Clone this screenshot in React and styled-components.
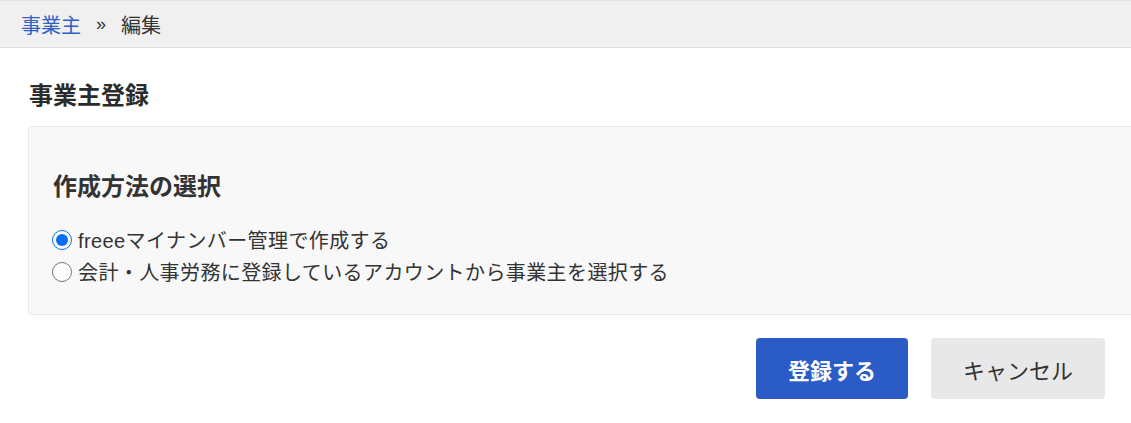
import React from "react";
import styled, { createGlobalStyle } from "styled-components";

const Global = createGlobalStyle`
  html, body { margin: 0; padding: 0; background: #fff; overflow: hidden; }
  body { font-family: "Liberation Sans", "Noto Sans CJK JP", sans-serif; color: #333; }
`;

const Page = styled.div`
  width: 1131px;
  height: 423px;
  overflow: hidden;
`;

const Header = styled.nav`
  height: 46px;
  background: #f0f0f0;
  border-top: 1px solid #e2e2e8;
  border-bottom: 1px solid #dedede;
  display: flex;
  align-items: center;
  padding-left: 21px;
  font-size: 20px;
  gap: 15px;
`;

const Crumb = styled.a`
  color: ${(p) => (p.$link ? "#2f5fc4" : "#333")};
  text-decoration: none;
`;

const Sep = styled.span`
  color: #333;
  font-size: 18px;
`;

const Main = styled.main`
  padding-left: 28px;
`;

const Title = styled.h1`
  margin: 0;
  padding: 32px 0 0 1px;
  height: 46px;
  font-size: 24px;
  font-weight: bold;
  line-height: 32px;
  color: #2b2b2b;
`;

const Panel = styled.section`
  margin-right: -20px;
  height: 189px;
  box-sizing: border-box;
  background: #f8f8f8;
  border: 1px solid #e8e8e8;
  border-radius: 4px;
  padding: 44px 24px 0;
`;

const PanelTitle = styled.h2`
  margin: 0 0 22px;
  font-size: 24px;
  line-height: 32px;
  font-weight: bold;
  color: #333;
`;

const Option = styled.label`
  display: flex;
  align-items: center;
  height: 32px;
  line-height: 32px;
  font-size: 20px;
  letter-spacing: 0.4px;
  color: #333;
  gap: 6px;
`;

const Radio = styled.input.attrs({ type: "radio" })`
  width: 20px;
  height: 20px;
  margin: 0 0 2px -1px;
  accent-color: #0a6cf5;
`;

const Actions = styled.div`
  display: flex;
  justify-content: flex-end;
  gap: 23px;
  padding: 23px 26px 0 0;
`;

const Button = styled.button`
  height: 61px;
  min-width: ${(p) => (p.$primary ? "152px" : "174px")};
  border: none;
  border-radius: 4px;
  font-family: inherit;
  font-size: 22px;
  font-weight: ${(p) => (p.$primary ? "bold" : "normal")};
  color: ${(p) => (p.$primary ? "#fff" : "#333")};
  background: ${(p) => (p.$primary ? "#2a5bc7" : "#e8e8e8")};
`;

export default function App() {
  return (
    <Page>
      <Global />
      <Header>
        <Crumb $link href="#">事業主</Crumb>
        <Sep>»</Sep>
        <Crumb>編集</Crumb>
      </Header>
      <Main>
        <Title>事業主登録</Title>
        <Panel>
          <PanelTitle>作成方法の選択</PanelTitle>
          <Option>
            <Radio name="m" defaultChecked />
            freeeマイナンバー管理で作成する
          </Option>
          <Option>
            <Radio name="m" />
            会計・人事労務に登録しているアカウントから事業主を選択する
          </Option>
        </Panel>
        <Actions>
          <Button $primary>登録する</Button>
          <Button>キャンセル</Button>
        </Actions>
      </Main>
    </Page>
  );
}
